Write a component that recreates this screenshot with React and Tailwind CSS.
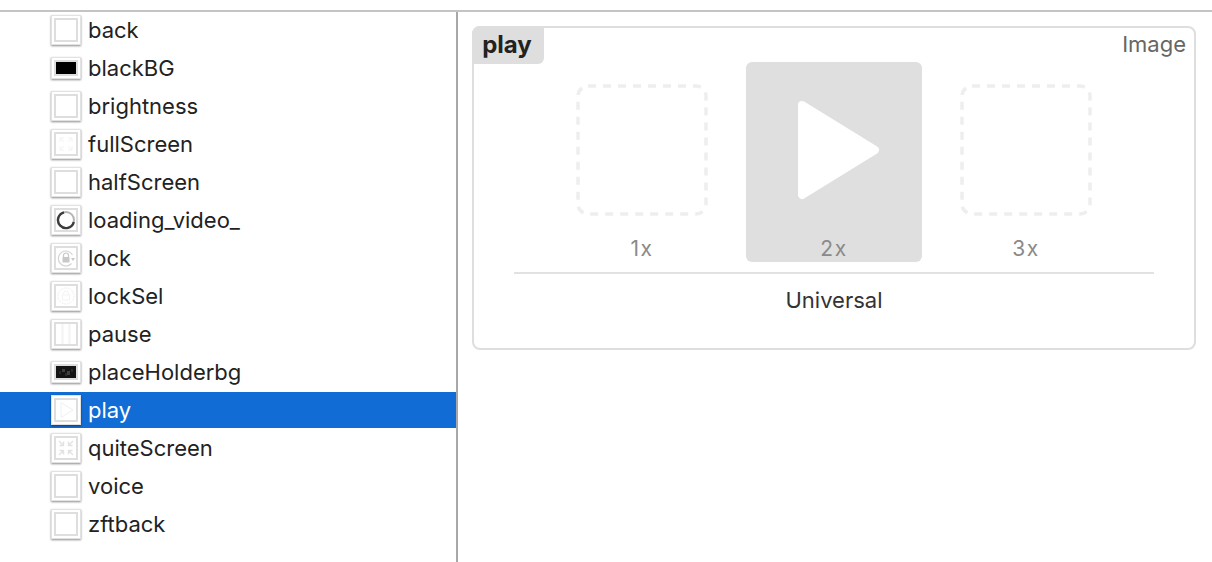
const assets = [
  { name: "back" },
  { name: "blackBG", kind: "black" },
  { name: "brightness" },
  { name: "fullScreen", kind: "full" },
  { name: "halfScreen" },
  { name: "loading_video_", kind: "loading" },
  { name: "lock", kind: "lock" },
  { name: "lockSel", kind: "lockSel" },
  { name: "pause", kind: "pause" },
  { name: "placeHolderbg", kind: "holder" },
  { name: "play", kind: "play", selected: true },
  { name: "quiteScreen", kind: "quit" },
  { name: "voice" },
  { name: "zftback" },
];

function ThumbArt({ kind }) {
  if (kind === "loading") {
    return (
      <svg viewBox="0 0 20 20" className="block h-full w-full">
        <circle cx="10" cy="10" r="8" fill="none" stroke="#b5b5b5" strokeWidth="2" />
        <path d="M17.8 12A8 8 0 0 1 4.3 15.7A8 8 0 0 1 8 2.3" fill="none" stroke="#3c3c3c" strokeWidth="2.4" />
      </svg>
    );
  }
  if (kind === "lock") {
    return (
      <svg viewBox="0 0 20 20" className="block h-full w-full">
        <path d="M16.5 7A7.5 7.5 0 1 0 15.5 15.5" fill="none" stroke="#d4d4d4" strokeWidth="1.2" />
        <path d="M7.5 9V7.5a2.5 2.5 0 0 1 5 0V9" fill="none" stroke="#c8c8c8" strokeWidth="1.2" />
        <rect x="6.5" y="9" width="7" height="5.5" rx="0.5" fill="#c8c8c8" />
        <path d="M15 10h4l-2 3z" fill="#c8c8c8" />
      </svg>
    );
  }
  if (kind === "lockSel") {
    return (
      <svg viewBox="0 0 20 20" className="block h-full w-full">
        <circle cx="10" cy="10" r="8" fill="none" stroke="#ececec" strokeWidth="1" strokeDasharray="1.5 1" />
        <path d="M7.5 9V7.5a2.5 2.5 0 0 1 5 0V9M6.5 9h7v5h-7z" fill="none" stroke="#f0f0f0" strokeWidth="0.8" />
      </svg>
    );
  }
  if (kind === "pause") {
    return (
      <svg viewBox="0 0 20 20" className="block h-full w-full">
        <path d="M6.5 0v20M13.5 0v20" stroke="#f3f3f3" strokeWidth="2" />
      </svg>
    );
  }
  if (kind === "play") {
    return (
      <svg viewBox="0 0 20 20" className="block h-full w-full">
        <path d="M5 2.5L17 10 5 17.5z" fill="none" stroke="#f0f0f0" strokeWidth="1" />
      </svg>
    );
  }
  if (kind === "quit") {
    return (
      <svg viewBox="0 0 20 20" className="block h-full w-full">
        <path d="M7.5 3.5v4H3.5M12.5 3.5v4h4M7.5 16.5v-4H3.5M12.5 16.5v-4h4M3 3l4 4M17 3l-4 4M3 17l4-4M17 17l-4-4" fill="none" stroke="#e2e2e2" strokeWidth="1.4" />
      </svg>
    );
  }
  if (kind === "full") {
    return (
      <svg viewBox="0 0 20 20" className="block h-full w-full">
        <path d="M4 8V4h4M16 8V4h-4M4 12v4h4M16 12v4h-4M4 4l4 4M16 4l-4 4M4 16l4-4M16 16l-4-4" fill="none" stroke="#f2f2f2" strokeWidth="1" />
      </svg>
    );
  }
  return null;
}

function Thumb({ kind }) {
  if (kind === "black" || kind === "holder") {
    return (
      <span className="block h-[22px] w-[30px] border border-[#e2e2e2] bg-white p-[2px] shadow-[0_1px_2px_rgba(0,0,0,0.45)]">
        <span className="block h-full w-full border-2 border-[#dedede]">
          {kind === "black" ? (
            <span className="block h-full w-full bg-black" />
          ) : (
            <svg viewBox="0 0 20 12" preserveAspectRatio="none" className="block h-full w-full bg-[#141414]">
              <path d="M6 3h3v3H6zM11 5h3v4h-3z" fill="#3f3f3f" />
              <path d="M3 5h2v3H3zM9 7h2v3H9zM15 3h2v3h-2z" fill="#2a2a2a" />
            </svg>
          )}
        </span>
      </span>
    );
  }
  return (
    <span className="block h-[30px] w-[30px] border border-[#e2e2e2] bg-white p-[2px] shadow-[0_1px_2px_rgba(0,0,0,0.45)]">
      <span className="block h-full w-full border-2 border-[#dedede]">
        <ThumbArt kind={kind} />
      </span>
    </span>
  );
}

function Slot({ label, filled }) {
  return (
    <div className={"flex h-[200px] w-[176px] flex-col items-center rounded-[6px] " + (filled ? "bg-[#dfdfdf]" : "")}>
      <div className="mt-[22px] h-[132px] w-[132px]">
        {filled ? (
          <svg viewBox="0 0 132 132" className="h-full w-full">
            <path d="M34 21L107 66 34 111z" fill="#fff" stroke="#fff" strokeWidth="8" strokeLinejoin="round" />
          </svg>
        ) : (
          <svg viewBox="0 0 132 132" className="h-full w-full">
            <rect x="2" y="2" width="128" height="128" rx="10" fill="none" stroke="#eeeeee" strokeWidth="3.5" strokeDasharray="8 7" />
          </svg>
        )}
      </div>
      <span className="mt-[20px] text-[21px] leading-[26px] tracking-[1.5px] text-[#8a8a8a]">{label}</span>
    </div>
  );
}

export default function App() {
  return (
    <div className="h-[562px] w-[1212px] overflow-hidden bg-white font-['Inter',sans-serif] text-[#222]">
      <div className="mt-[10px] flex h-[552px] border-t-2 border-[#c4c4c4]">
        <ul className="flex w-[456px] flex-col gap-[2px]">
          {assets.map((a) => (
            <li
              key={a.name}
              className={"flex h-[36px] items-center gap-[7px] pl-[51px] text-[22px] " + (a.selected ? "bg-[#116cd6] text-white" : "")}
            >
              <Thumb kind={a.kind} />
              <span>{a.name}</span>
            </li>
          ))}
        </ul>
        <div className="w-[2px] bg-[#a8a8a8]" />
        <div className="flex-1 pt-[14px] pl-[14px]">
          <div className="relative h-[324px] w-[724px] rounded-[8px] border-2 border-[#dedede] pt-[34px]">
            <div className="absolute -top-[2px] -left-[2px] flex h-[38px] w-[72px] items-center justify-center rounded-tl-[8px] rounded-br-[6px] bg-[#dedede] pr-[2px] text-[24px] font-bold">
              play
            </div>
            <div className="absolute top-0 right-[8px] text-[22px] text-[#666]">Image</div>
            <div className="flex justify-center gap-[16px]">
              <Slot label="1x" />
              <Slot label="2x" filled />
              <Slot label="3x" />
            </div>
            <div className="mx-[40px] mt-[10px] h-[2px] bg-[#e2e2e2]" />
            <div className="mt-[13px] text-center text-[22px] leading-[26px] text-[#333]">Universal</div>
          </div>
        </div>
      </div>
    </div>
  );
}
